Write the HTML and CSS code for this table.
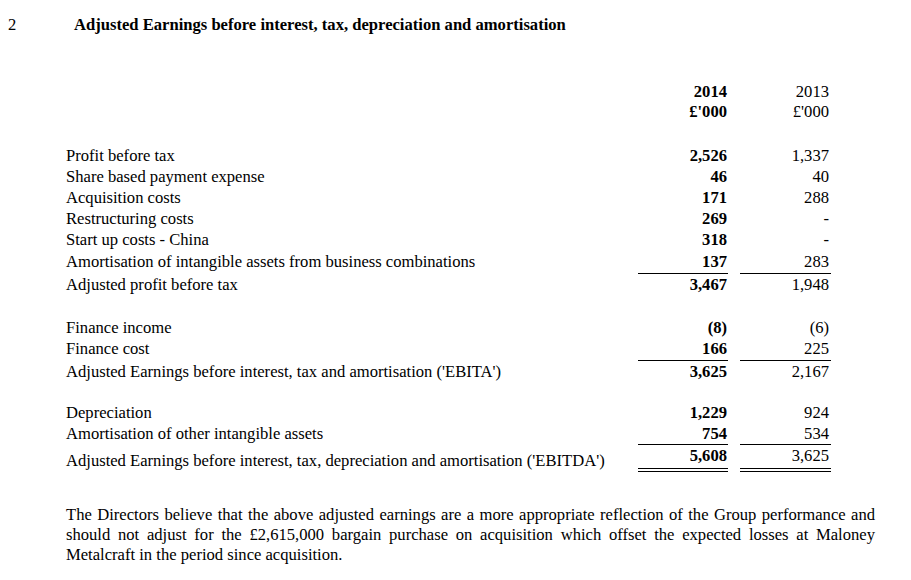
FILE: index.html
```html
<!DOCTYPE html>
<html>
<head>
<meta charset="utf-8">
<link rel="stylesheet" href="styles.css">
</head>
<body>
<div class="page">
  <div class="heading">
    <span class="num">2</span>
    <h1 class="title">Adjusted Earnings before interest, tax, depreciation and amortisation</h1>
  </div>

  <div class="table">
    <div class="row head"><span class="label"></span><span class="v b">2014</span><span class="v">2013</span></div>
    <div class="row head"><span class="label"></span><span class="v b">£'000</span><span class="v">£'000</span></div>

    <div class="row sec"><span class="label">Profit before tax</span><span class="v b">2,526</span><span class="v">1,337</span></div>
    <div class="row"><span class="label">Share based payment expense</span><span class="v b">46</span><span class="v">40</span></div>
    <div class="row"><span class="label">Acquisition costs</span><span class="v b">171</span><span class="v">288</span></div>
    <div class="row"><span class="label">Restructuring costs</span><span class="v b">269</span><span class="v">-</span></div>
    <div class="row"><span class="label">Start up costs - China</span><span class="v b">318</span><span class="v">-</span></div>
    <div class="row tall"><span class="label">Amortisation of intangible assets from business combinations</span><span class="v b">137</span><span class="v">283</span></div>
    <div class="row total"><span class="label">Adjusted profit before tax</span><span class="v b">3,467</span><span class="v">1,948</span></div>

    <div class="row sec2"><span class="label">Finance income</span><span class="v b">(8)</span><span class="v">(6)</span></div>
    <div class="row"><span class="label">Finance cost</span><span class="v b">166</span><span class="v">225</span></div>
    <div class="row total"><span class="label">Adjusted Earnings before interest, tax and amortisation ('EBITA')</span><span class="v b">3,625</span><span class="v">2,167</span></div>

    <div class="row sec3"><span class="label">Depreciation</span><span class="v b">1,229</span><span class="v">924</span></div>
    <div class="row"><span class="label">Amortisation of other intangible assets</span><span class="v b">754</span><span class="v">534</span></div>
    <div class="row total grand"><span class="label">Adjusted Earnings before interest, tax, depreciation and amortisation ('EBITDA')</span><span class="v b">5,608</span><span class="v">3,625</span></div>
  </div>

  <p class="note">The Directors believe that the above adjusted earnings are a more appropriate reflection of the Group performance and should not adjust for the £2,615,000 bargain purchase on acquisition which offset the expected losses at Maloney Metalcraft in the period since acquisition.</p>
</div>
</body>
</html>
```

FILE: styles.css
```css
html, body {
  margin: 0;
  padding: 0;
  background: #fff;
}
body {
  font-family: "Liberation Serif", "Times New Roman", serif;
  font-size: 16.6px;
  color: #000;
}
.page {
  width: 911px;
  height: 580px;
  overflow: hidden;
}
.heading {
  display: flex;
  align-items: baseline;
  padding-top: 14px;
  height: 22px;
}
.num {
  box-sizing: border-box;
  width: 74px;
  padding-left: 8px;
  line-height: 22px;
}
.title {
  margin: 0;
  font-size: 16.6px;
  font-weight: bold;
  line-height: 22px;
}
.table {
  margin-left: 66px;
  width: 765px;
  margin-top: 46px;
}
.row {
  display: grid;
  grid-template-columns: 1fr 90px 91px;
  column-gap: 12px;
  height: 21px;
  line-height: 21px;
}
.row .label {
  white-space: nowrap;
}
.row .v {
  text-align: right;
  padding-right: 1px;
}
.row .v:last-child {
  padding-right: 2px;
}
.head {
  height: 20px;
  line-height: 20px;
}
.b {
  font-weight: bold;
}
.sec {
  margin-top: 23px;
}
.tall {
  margin-top: 1px;
}
.sec2 {
  margin-top: 22px;
}
.sec3 {
  margin-top: 20px;
}
.total {
  height: 22px;
  margin-top: 1px;
}
.total .v {
  border-top: 1px solid #000;
}
.total .label {
  padding-top: 1px;
}
.grand {
  margin-top: 0;
}
.grand .label {
  padding-top: 6px;
}
.grand .v {
  position: relative;
}
.grand .v::after {
  content: "";
  position: absolute;
  left: 0;
  right: 0;
  top: 23px;
  height: 2px;
  border-top: 1px solid #000;
  border-bottom: 1px solid #000;
}
.note {
  margin: 39px 36px 0 66px;
  text-align: justify;
  line-height: 20px;
}
```
